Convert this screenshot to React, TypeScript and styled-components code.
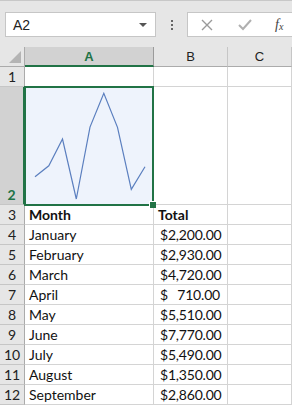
import { Fragment } from "react";
import styled, { createGlobalStyle } from "styled-components";

const GlobalStyle = createGlobalStyle`
  html, body {
    margin: 0;
    padding: 0;
    background: #ffffff;
  }
  body {
    font-family: "Lato", "Liberation Sans", sans-serif;
  }
`;

interface MonthTotal {
  month: string;
  total: number;
}

const data: MonthTotal[] = [
  { month: "January", total: 2200 },
  { month: "February", total: 2930 },
  { month: "March", total: 4720 },
  { month: "April", total: 710 },
  { month: "May", total: 5510 },
  { month: "June", total: 7770 },
  { month: "July", total: 5490 },
  { month: "August", total: 1350 },
  { month: "September", total: 2860 },
];

const Window = styled.div`
  width: 292px;
  height: 405px;
  overflow: hidden;
  background: #e6e6e6;
  border-top: 1px solid #c8c8c8;
  box-sizing: border-box;
`;

const FormulaBar = styled.div`
  height: 46px;
  display: flex;
  align-items: flex-start;
  padding: 11px 0 0 5px;
  box-sizing: border-box;
`;

const NameBox = styled.div`
  width: 151px;
  height: 25px;
  background: #ffffff;
  border: 1px solid #c6c6c6;
  box-sizing: border-box;
  display: flex;
  align-items: center;
  justify-content: space-between;
  padding: 0 8px 0 7px;
  font-family: "Liberation Sans", sans-serif;
  font-size: 14px;
  color: #222;
`;

const Caret = styled.span`
  width: 0;
  height: 0;
  border-left: 4px solid transparent;
  border-right: 4px solid transparent;
  border-top: 4px solid #555;
`;

const Grip = styled.div`
  width: 31px;
  height: 25px;
  display: flex;
  flex-direction: column;
  align-items: center;
  justify-content: center;
  gap: 2px;
  & span {
    width: 2px;
    height: 2px;
    background: #666;
  }
`;

const InputBox = styled.div`
  flex: 1;
  height: 25px;
  background: #ffffff;
  border: 1px solid #c6c6c6;
  border-right: none;
  box-sizing: border-box;
  display: flex;
  align-items: center;
  padding-left: 13px;
  gap: 20px;
`;

const Fx = styled.span`
  font-family: "Liberation Serif", serif;
  font-style: italic;
  font-size: 14px;
  color: #444;
  margin-left: 3px;
  & sub {
    font-size: 10px;
    vertical-align: -1px;
  }
`;

const Sheet = styled.div`
  display: grid;
  grid-template-columns: 25px 129px 74px 64px;
  grid-template-rows: 20px 20px 118px repeat(10, 20px);
  background: #ffffff;
`;

const Corner = styled.div`
  background: #e6e6e6;
  border-right: 1px solid #ababab;
  border-bottom: 1px solid #ababab;
  box-sizing: border-box;
  display: flex;
  align-items: flex-end;
  justify-content: flex-end;
  padding: 0 3px 3px 0;
  & span {
    width: 0;
    height: 0;
    border-left: 12px solid transparent;
    border-bottom: 12px solid #b4b4b4;
  }
`;

const ColHead = styled.div<{ $active?: boolean }>`
  background: ${(p) => (p.$active ? "#d2d2d2" : "#e6e6e6")};
  border-right: 1px solid ${(p) => (p.$active ? "#9b9b9b" : "#c6c6c6")};
  border-bottom: ${(p) => (p.$active ? "2px solid #217346" : "1px solid #ababab")};
  box-sizing: border-box;
  display: flex;
  align-items: center;
  justify-content: center;
  font-family: "Liberation Sans", sans-serif;
  font-size: 13px;
  font-weight: ${(p) => (p.$active ? 700 : 400)};
  color: ${(p) => (p.$active ? "#217346" : "#222")};
`;

const RowHead = styled.div<{ $active?: boolean }>`
  background: ${(p) => (p.$active ? "#d2d2d2" : "#e6e6e6")};
  border-right: ${(p) => (p.$active ? "2px solid #217346" : "1px solid #ababab")};
  border-bottom: 1px solid #c6c6c6;
  box-sizing: border-box;
  display: flex;
  align-items: flex-end;
  justify-content: center;
  padding-bottom: 1px;
  font-family: "Lato", sans-serif;
  font-size: 14px;
  font-weight: ${(p) => (p.$active ? 700 : 400)};
  color: ${(p) => (p.$active ? "#217346" : "#222")};
`;

const Cell = styled.div<{ $bold?: boolean }>`
  min-width: 0;
  border-right: 1px solid #d4d4d4;
  border-bottom: 1px solid #d4d4d4;
  box-sizing: border-box;
  display: flex;
  align-items: flex-end;
  padding: 0 3px 0 4px;
  font-size: 14px;
  line-height: 18px;
  font-weight: ${(p) => (p.$bold ? 700 : 400)};
  color: #111;
  white-space: nowrap;
`;

const MoneyCell = styled(Cell)`
  justify-content: space-between;
  padding: 0 7px 0 6px;
  letter-spacing: -0.2px;
`;

const SelectedCell = styled.div`
  position: relative;
  border: 2px solid #217346;
  margin: -1px 0 -1px -1px;
  background: #eef3fc;
  z-index: 1;
`;

const FillHandle = styled.span`
  position: absolute;
  right: -4px;
  bottom: -4px;
  width: 6px;
  height: 6px;
  background: #217346;
  border: 1px solid #ffffff;
  border-right: none;
  border-bottom: none;
`;

const ChartSvg = styled.svg`
  display: block;
  width: 100%;
  height: 100%;
`;

function Sparkline() {
  const min = 710;
  const max = 7770;
  const points = data
    .map((d, i) => {
      const x = 9 + i * 13.75;
      const y = 111 - ((d.total - min) / (max - min)) * 105.7;
      return `${x.toFixed(1)},${y.toFixed(1)}`;
    })
    .join(" ");
  return (
    <ChartSvg viewBox="0 0 126 116" preserveAspectRatio="none">
      <polyline points={points} fill="none" stroke="#5b7fbf" strokeWidth="1.2" />
    </ChartSvg>
  );
}

function formatAmount(v: number) {
  return v.toLocaleString("en-US", { minimumFractionDigits: 2, maximumFractionDigits: 2 });
}

export default function App() {
  return (
    <Window>
      <GlobalStyle />
      <FormulaBar>
        <NameBox>
          A2
          <Caret />
        </NameBox>
        <Grip>
          <span />
          <span />
          <span />
        </Grip>
        <InputBox>
          <svg width="12" height="12" viewBox="0 0 12 12">
            <path d="M1 1 L11 11 M11 1 L1 11" stroke="#9a9a9a" strokeWidth="1.4" />
          </svg>
          <svg width="14" height="12" viewBox="0 0 14 12" style={{ marginLeft: 5 }}>
            <path d="M1 6 L5 10 L13 1" stroke="#b0b0b0" strokeWidth="2" fill="none" />
          </svg>
          <Fx>
            f<sub>x</sub>
          </Fx>
        </InputBox>
      </FormulaBar>
      <Sheet>
        <Corner>
          <span />
        </Corner>
        <ColHead $active>A</ColHead>
        <ColHead>B</ColHead>
        <ColHead>C</ColHead>

        <RowHead>1</RowHead>
        <Cell />
        <Cell />
        <Cell />

        <RowHead $active>2</RowHead>
        <SelectedCell>
          <Sparkline />
          <FillHandle />
        </SelectedCell>
        <Cell />
        <Cell />

        <RowHead>3</RowHead>
        <Cell $bold>Month</Cell>
        <Cell $bold>Total</Cell>
        <Cell />

        {data.map((d, i) => (
          <Fragment key={d.month}>
            <RowHead>{i + 4}</RowHead>
            <Cell>{d.month}</Cell>
            <MoneyCell>
              <span>$</span>
              <span>{formatAmount(d.total)}</span>
            </MoneyCell>
            <Cell />
          </Fragment>
        ))}
      </Sheet>
    </Window>
  );
}
